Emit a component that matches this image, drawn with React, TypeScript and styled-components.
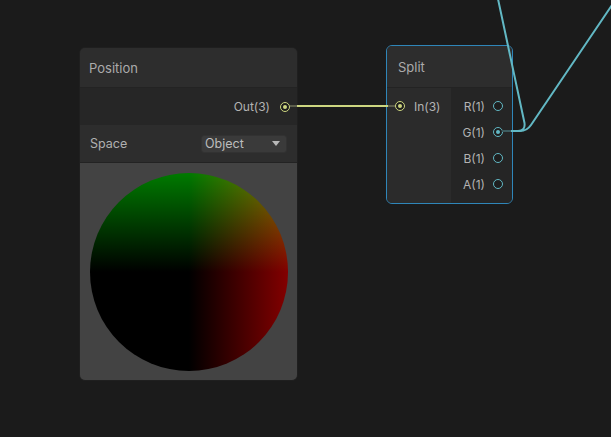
import React from 'react'
import styled, { createGlobalStyle } from 'styled-components'

const GlobalStyle = createGlobalStyle`
  html, body {
    margin: 0;
    padding: 0;
    background: #1b1b1b;
  }
  body {
    font-family: Inter, "Noto Sans", sans-serif;
  }
`;

const TEAL = '#62b8c4';
const YELLOW = '#cdd680';

interface Port {
  label: string;
  color: string;
  connected?: boolean;
}

const splitOutputs: Port[] = [
  { label: 'R(1)', color: TEAL },
  { label: 'G(1)', color: TEAL, connected: true },
  { label: 'B(1)', color: TEAL },
  { label: 'A(1)', color: TEAL },
];

function PortDot({ color, connected }: { color: string; connected?: boolean }) {
  return (
    <Dot $color={color}>
      {connected && <DotCore $color={color} />}
    </Dot>
  );
}

function Wires() {
  return (
    <WireLayer width={611} height={437} viewBox="0 0 611 437">
      {/* position -> split */}
      <line x1={290} y1={106} x2={297} y2={106} stroke="#5c5e4c" strokeWidth={2} />
      <line x1={297} y1={106} x2={388} y2={106} stroke={YELLOW} strokeWidth={2} />
      <line x1={388} y1={106} x2={395} y2={106} stroke="#5c5e4c" strokeWidth={2} />
      {/* split G -> offscreen */}
      <line x1={502} y1={131} x2={511} y2={131} stroke="#3d5c60" strokeWidth={2} />
      <path d="M 511 131 L 518 131 Q 525.5 131 524.5 123 L 498 -1" fill="none" stroke={TEAL} strokeWidth={2} />
      <path d="M 511 131 L 520 131 Q 527 131 531 125 L 614 2" fill="none" stroke={TEAL} strokeWidth={2} />
    </WireLayer>
  );
}

export default function App() {
  return (
    <>
      <GlobalStyle />
      <Canvas>
        <Node $x={79} $y={47} $w={219}>
          <Header $h={40} $pad={9}>Position</Header>
          <OutRow>
            <PortLabel>Out(3)</PortLabel>
            <PortDot color={YELLOW} connected />
          </OutRow>
          <FieldRow>
            <FieldLabel>Space</FieldLabel>
            <Dropdown>
              <span>Object</span>
              <Caret />
            </Dropdown>
          </FieldRow>
          <Preview>
            <Sphere />
          </Preview>
        </Node>

        <Node $x={386} $y={45} $w={127} $selected>
          <Header $h={42} $pad={11}>Split</Header>
          <SplitBody>
            <InputColumn>
              <InPort>
                <PortDot color={YELLOW} connected />
                <PortLabel>In(3)</PortLabel>
              </InPort>
            </InputColumn>
            <OutputColumn>
              {splitOutputs.map(p => (
                <OutPort key={p.label}>
                  <PortLabel>{p.label}</PortLabel>
                  <PortDot color={p.color} connected={p.connected} />
                </OutPort>
              ))}
            </OutputColumn>
          </SplitBody>
        </Node>

        <Wires />
      </Canvas>
    </>
  );
}

const Canvas = styled.div`
  position: relative;
  width: 611px;
  height: 437px;
  overflow: hidden;
  background: #1b1b1b;
`;

const Node = styled.div<{ $x: number; $y: number; $w: number; $selected?: boolean }>`
  position: absolute;
  left: ${p => p.$x}px;
  top: ${p => p.$y}px;
  width: ${p => p.$w}px;
  box-sizing: border-box;
  display: flex;
  flex-direction: column;
  border: 1px solid ${p => (p.$selected ? '#2f86b9' : '#1f1f1f')};
  border-radius: 6px;
  overflow: hidden;
  background: #2b2b2b;
`;

const Header = styled.div<{ $h: number; $pad: number }>`
  height: ${p => p.$h}px;
  box-sizing: border-box;
  display: flex;
  align-items: center;
  padding-left: ${p => p.$pad}px;
  background: #2d2d2d;
  border-bottom: 1px solid #232323;
  color: #ababab;
  font-size: 13px;
`;

const OutRow = styled.div`
  height: 37px;
  display: flex;
  align-items: center;
  justify-content: flex-end;
  gap: 10px;
  padding-right: 7px;
  background: #262626;
`;

const PortLabel = styled.span`
  color: #b3b3b3;
  font-size: 12px;
`;

const Dot = styled.div<{ $color: string }>`
  width: 10px;
  height: 10px;
  box-sizing: border-box;
  border-radius: 50%;
  border: 1.5px solid ${p => p.$color};
  background: #1e1e1e;
  display: flex;
  align-items: center;
  justify-content: center;
  flex-shrink: 0;
`;

const DotCore = styled.div<{ $color: string }>`
  width: 4px;
  height: 4px;
  border-radius: 50%;
  background: ${p => p.$color};
`;

const FieldRow = styled.div`
  height: 37px;
  display: flex;
  align-items: center;
  justify-content: space-between;
  padding: 0 10px 0 10px;
  background: #2d2d2d;
  border-bottom: 1px solid #232323;
`;

const FieldLabel = styled.span`
  color: #b0b0b0;
  font-size: 12.5px;
`;

const Dropdown = styled.div`
  width: 86px;
  height: 18px;
  box-sizing: border-box;
  display: flex;
  align-items: center;
  justify-content: space-between;
  padding: 0 6px 0 3px;
  background: #3a3a3a;
  border: 1px solid #323232;
  border-radius: 3px;
  color: #bdbdbd;
  font-size: 12.5px;
`;

const Caret = styled.div`
  width: 0;
  height: 0;
  border-left: 4.5px solid transparent;
  border-right: 4.5px solid transparent;
  border-top: 5px solid #b8b8b8;
`;

const Preview = styled.div`
  height: 217px;
  display: flex;
  align-items: center;
  justify-content: center;
  background: #434343;
`;

const Sphere = styled.div`
  width: 198px;
  height: 198px;
  border-radius: 50%;
  background:
    linear-gradient(to right, #000 50%, #830000 100%),
    linear-gradient(to top, #000 50%, #007a00 100%);
  background-blend-mode: screen;
`;

const SplitBody = styled.div`
  display: flex;
  height: 115px;
`;

const InputColumn = styled.div`
  width: 64px;
  padding-top: 5px;
  background: #2b2b2b;
`;

const InPort = styled.div`
  height: 26px;
  display: flex;
  align-items: center;
  gap: 9px;
  padding-left: 8px;
`;

const OutputColumn = styled.div`
  flex: 1;
  padding-top: 5px;
  background: #252525;
`;

const OutPort = styled.div`
  height: 26px;
  display: flex;
  align-items: center;
  justify-content: flex-end;
  gap: 8px;
  padding-right: 9px;
`;

const WireLayer = styled.svg`
  position: absolute;
  left: 0;
  top: 0;
  pointer-events: none;
`;
